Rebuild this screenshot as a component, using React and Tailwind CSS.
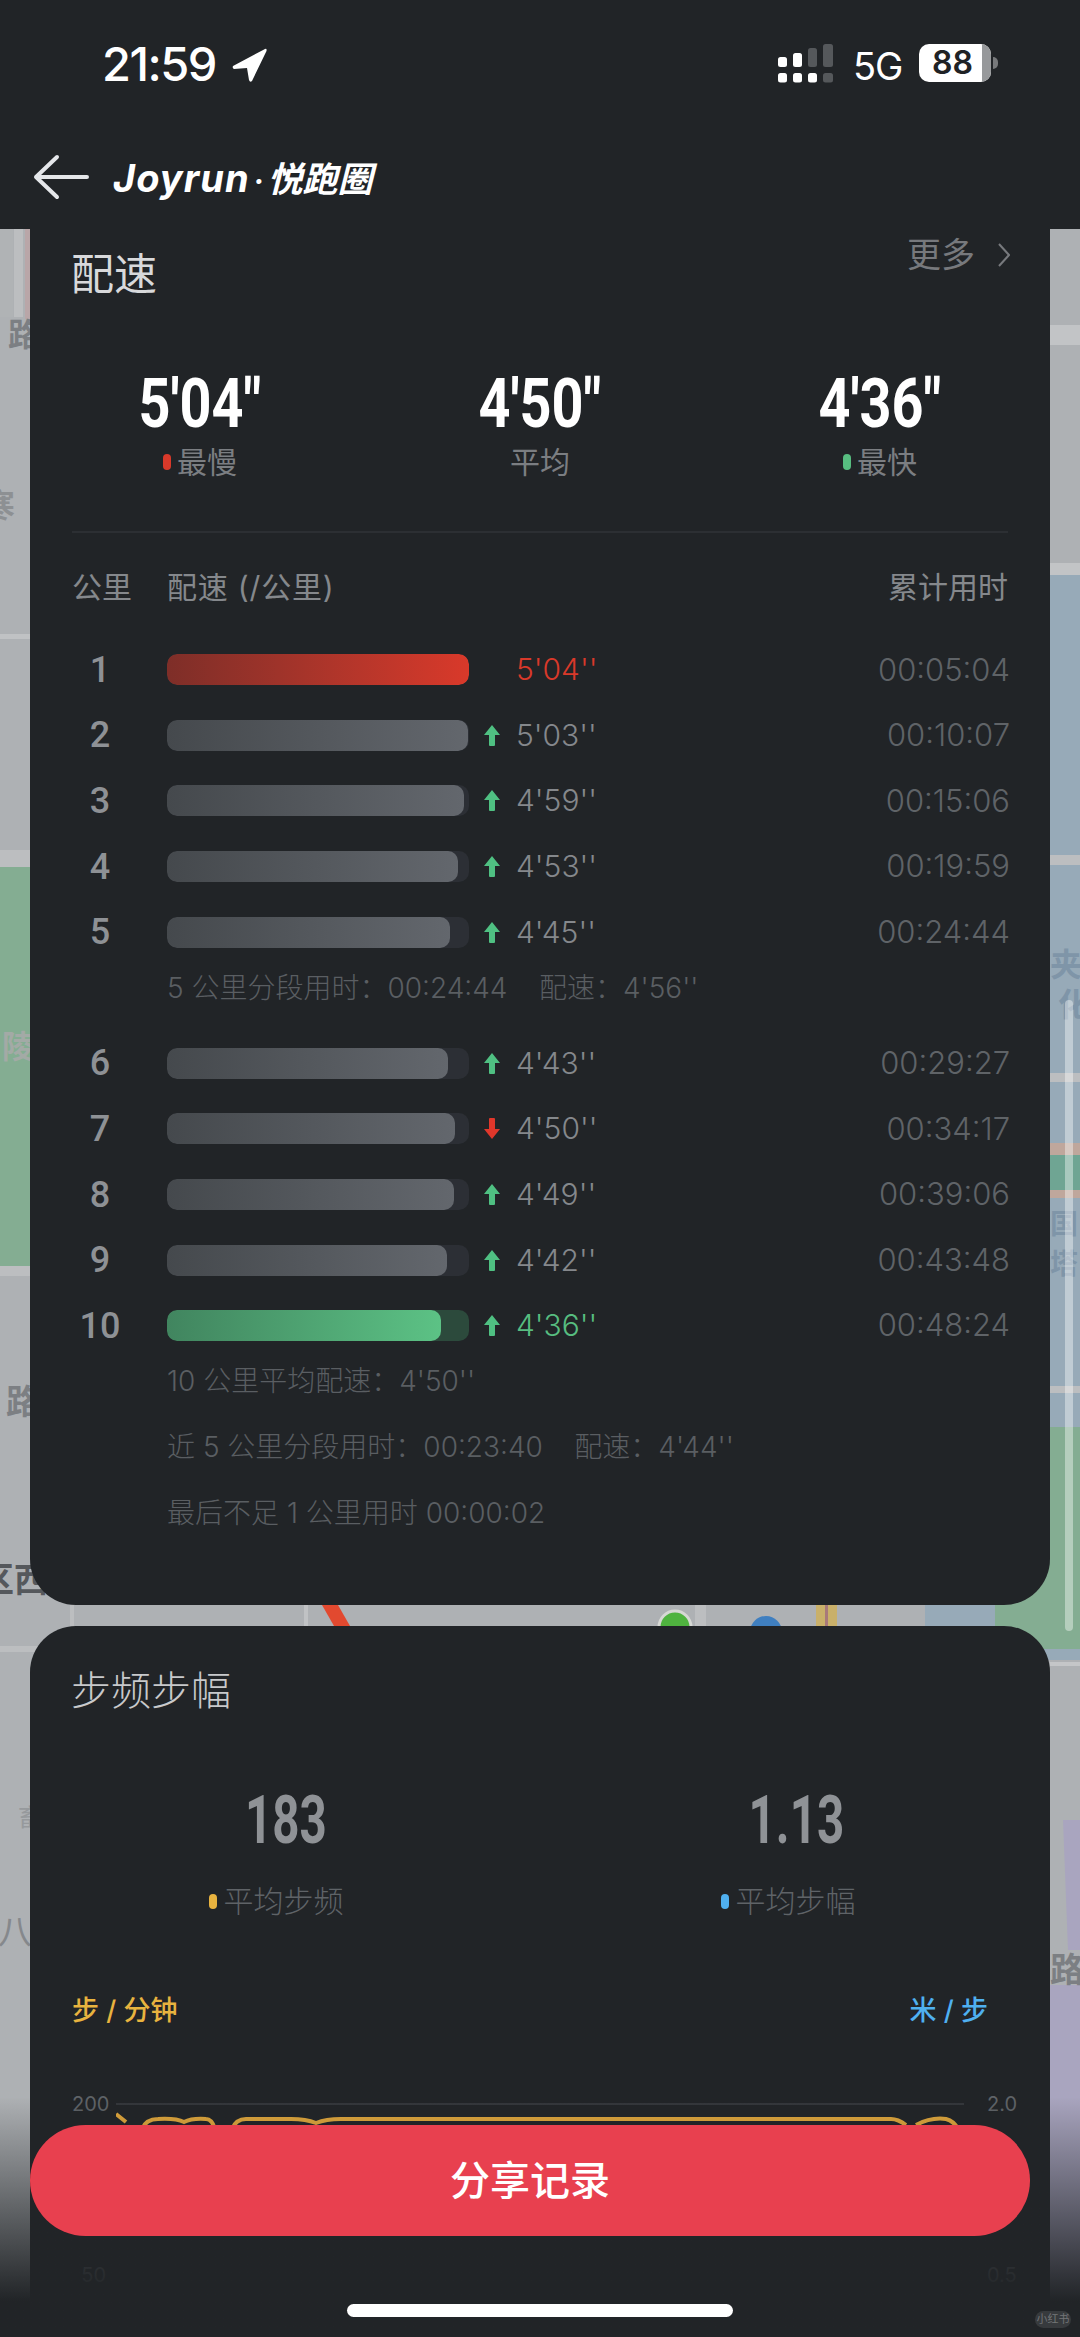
const splits = [
  { km: 1, fill: 302, pace: "5'04''", total: "00:05:04", tone: "red" },
  { km: 2, fill: 301, pace: "5'03''", total: "00:10:07", arrow: "up" },
  { km: 3, fill: 297, pace: "4'59''", total: "00:15:06", arrow: "up" },
  { km: 4, fill: 291, pace: "4'53''", total: "00:19:59", arrow: "up" },
  { km: 5, fill: 283, pace: "4'45''", total: "00:24:44", arrow: "up" },
];

const splitsTwo = [
  { km: 6, fill: 281, pace: "4'43''", total: "00:29:27", arrow: "up" },
  { km: 7, fill: 288, pace: "4'50''", total: "00:34:17", arrow: "down" },
  { km: 8, fill: 287, pace: "4'49''", total: "00:39:06", arrow: "up" },
  { km: 9, fill: 280, pace: "4'42''", total: "00:43:48", arrow: "up" },
  { km: 10, fill: 274, pace: "4'36''", total: "00:48:24", arrow: "up", tone: "green" },
];

function MapBackground() {
  return (
    <svg className="absolute inset-0" width="1080" height="2337" viewBox="0 0 1080 2337">
      <rect width="1080" height="2337" fill="#aeb1b4" />
      <rect x="0" y="229" width="13" height="88" fill="#b0b3b5" />
      <rect x="14" y="229" width="9" height="88" fill="#bcbec0" />
      <rect x="25" y="229" width="5" height="90" fill="#b9a6a8" />
      <rect x="0" y="634" width="30" height="5" fill="#c0c2c4" />
      <rect x="0" y="850" width="30" height="17" fill="#bcbec0" />
      <rect x="0" y="867" width="30" height="399" fill="#84ad92" />
      <rect x="0" y="1266" width="30" height="10" fill="#bcbec0" />
      <rect x="0" y="1646" width="150" height="6" fill="#bcbec0" />
      <rect x="70" y="1605" width="4" height="30" fill="#bcbec0" />
      <rect x="304" y="1605" width="4" height="21" fill="#c0c2c4" />
      <rect x="695" y="1605" width="11" height="21" fill="#bcbec0" />
      <path d="M322 1605 L334 1626 L350 1626 L338 1605 Z" fill="#e2492f" />
      <circle cx="675" cy="1627" r="16" fill="#4fb33f" stroke="#d6d8d4" strokeWidth="3" />
      <circle cx="766" cy="1632" r="16" fill="#3f7fc0" />
      <rect x="816" y="1605" width="21" height="21" fill="#c9b06a" />
      <rect x="825" y="1605" width="3" height="21" fill="#a8797a" />
      <rect x="925" y="1605" width="70" height="21" fill="#97aab8" />
      <rect x="995" y="1427" width="85" height="222" fill="#84ad92" />
      <rect x="1050" y="229" width="30" height="336" fill="#aeb1b4" />
      <rect x="1050" y="325" width="30" height="20" fill="#c2c4c6" />
      <rect x="1050" y="563" width="30" height="12" fill="#c2c4c6" />
      <rect x="1050" y="575" width="30" height="852" fill="#97aab8" />
      <rect x="1050" y="855" width="30" height="10" fill="#bcbec0" />
      <rect x="1050" y="1073" width="30" height="9" fill="#bcbec0" />
      <rect x="1050" y="1143" width="30" height="12" fill="#bfa79c" />
      <rect x="1050" y="1155" width="30" height="35" fill="#6fa593" />
      <rect x="1050" y="1190" width="30" height="8" fill="#bfa79c" />
      <rect x="1050" y="1386" width="30" height="7" fill="#bcbec0" />
      <rect x="1050" y="1427" width="30" height="222" fill="#84ad92" />
      <rect x="1000" y="1649" width="80" height="11" fill="#97aab8" />
      <rect x="1050" y="1662" width="30" height="4" fill="#c4c6c8" />
      <path d="M1063 1820 H1080 V1950 H1068 Z" fill="#a9a5bf" />
      <rect x="1050" y="1985" width="30" height="352" fill="#a9a5bf" />
      <g fontFamily="'Noto Sans CJK SC', sans-serif" fontWeight="700" fill="#7c7f83">
        <text x="8" y="346" fontSize="32">路</text>
        <text x="-17" y="517" fontSize="32" fill="#8d9093">寒</text>
        <text x="2" y="1058" fontSize="32" fill="#a3aaa6">陵</text>
        <text x="6" y="1414" fontSize="34">路</text>
        <text x="-20" y="1592" fontSize="34" fill="#55585c">区西</text>
        <text x="-2" y="1944" fontSize="34" fontWeight="400" fill="#85888c">八</text>
        <text x="18" y="1826" fontSize="24" fontWeight="400" fill="#96999c">畜</text>
        <text x="1050" y="1982" fontSize="34">路</text>
        <text x="1050" y="976" fontSize="32" fill="#7f95a8">夹</text>
        <text x="1058" y="1016" fontSize="32" fill="#7f95a8">化</text>
        <text x="1050" y="1234" fontSize="28" fill="#7f95a8">国</text>
        <text x="1050" y="1274" fontSize="28" fill="#7f95a8">塔</text>
      </g>
    </svg>
  );
}

function StatusBar() {
  return (
    <div className="relative h-[120px]">
      <span className="absolute left-[102px] top-[36px] text-[47px] leading-[56px] font-medium tracking-[-1.5px] text-white">21:59</span>
      <svg className="absolute left-[232px] top-[48px]" width="36" height="35" viewBox="0 0 36 35">
        <path d="M1 18 L33 1 Q35 0 34.5 3 L20 33 Q18 35 17 32 L15 20 L2 21 Q0 20 1 18 Z" fill="#fff" />
      </svg>
      <svg className="absolute left-[778px] top-[44px]" width="56" height="39" viewBox="0 0 56 39">
        <rect x="0" y="13" width="9" height="10" rx="2.5" fill="#fff" />
        <rect x="15" y="9" width="9" height="14" rx="2.5" fill="#fff" />
        <rect x="30" y="4" width="9" height="19" rx="2.5" fill="#55585b" />
        <rect x="45" y="0" width="10" height="23" rx="2.5" fill="#55585b" />
        <rect x="0" y="29" width="9" height="9.5" rx="2.5" fill="#fff" />
        <rect x="15" y="29" width="9" height="9.5" rx="2.5" fill="#fff" />
        <rect x="30" y="29" width="9" height="9.5" rx="2.5" fill="#fff" />
        <rect x="45" y="29" width="10" height="9.5" rx="2.5" fill="#55585b" />
      </svg>
      <span className="absolute left-[853px] top-[43px] text-[38px] leading-[46px] tracking-[-1px] text-white">5G</span>
      <div className="absolute left-[919px] top-[44px] flex h-[38px] w-[72px] items-center overflow-hidden rounded-[10px] bg-white">
        <span className="ml-[13px] text-[32px] leading-[38px] font-semibold text-[#1f2225]">88</span>
        <div className="absolute right-0 top-0 h-full w-[9px] bg-[#97999b]" />
      </div>
      <div className="absolute left-[993px] top-[57px] h-[12px] w-[5px] rounded-r-full bg-[#77797b]" />
    </div>
  );
}

function TitleBar() {
  return (
    <div className="flex h-[109px] items-start">
      <svg className="ml-[33px] mt-[34px]" width="56" height="46" viewBox="0 0 56 46">
        <path d="M24 3 L3 23 L24 43 M3 23 H54" fill="none" stroke="#e5e7ea" strokeWidth="4" strokeLinecap="round" strokeLinejoin="round" />
      </svg>
      <div className="ml-[24px] mt-[33px] flex items-baseline italic font-bold text-white">
        <span className="text-[38px] leading-[48px] tracking-[1px]">Joyrun</span>
        <span className="mx-[4px] text-[30px] leading-[48px]">·</span>
        <span className="text-[35px] leading-[48px] font-['Noto_Sans_CJK_SC',sans-serif]">悦跑圈</span>
      </div>
    </div>
  );
}

function Stat({ value, label, dot }) {
  return (
    <div className="flex flex-col items-center">
      <span className="scale-x-[.82] font-['Roboto',sans-serif] text-[68px] leading-[64px] font-bold text-white">{value}</span>
      <div className="mt-[10px] flex h-[32px] items-center gap-[6px] text-[30px] leading-[32px] text-[#7b7e82]">
        {dot && <span className={`h-[16px] w-[8px] rounded-full ${dot}`} />}
        <span>{label}</span>
      </div>
    </div>
  );
}

function Arrow({ dir }) {
  if (!dir) return <div className="ml-[15px] w-[16px]" />;
  return (
    <svg className={`ml-[15px] ${dir === "down" ? "rotate-180" : ""}`} width="16" height="21" viewBox="0 0 16 21">
      <path d="M8 0 L16 10 H11 V20 Q11 21 10 21 H6 Q5 21 5 20 V10 H0 Z" fill={dir === "down" ? "#e0372b" : "#4fc082"} />
    </svg>
  );
}

function SplitRow({ item }) {
  const track = item.tone === "green" ? "bg-[#2c4a3c]" : "bg-[#2c2f35]";
  const fill =
    item.tone === "red"
      ? "from-[#7e2e28] to-[#d9392a]"
      : item.tone === "green"
        ? "from-[#41855f] to-[#5cc285]"
        : "from-[#45494d] to-[#63676d]";
  const paceColor = item.tone === "red" ? "text-[#d9392a]" : item.tone === "green" ? "text-[#57bd80]" : "text-[#85888c]";
  return (
    <div className="flex h-[65.6px] items-center pl-[42px] pr-[40px]">
      <span className="w-[56px] text-center font-['Roboto',sans-serif] text-[36px] font-medium text-[#8e9195]">{item.km}</span>
      <div className={`ml-[39px] h-[31px] w-[302px] overflow-hidden rounded-[10px] ${track}`}>
        <div className={`h-full rounded-[10px] bg-gradient-to-r ${fill}`} style={{ width: item.fill }} />
      </div>
      <Arrow dir={item.arrow} />
      <span className={`ml-[16px] text-[30px] font-light ${paceColor}`}>{item.pace}</span>
      <span className="flex-1 text-right text-[31px] font-light text-[#5f6367]">{item.total}</span>
    </div>
  );
}

function Note({ children }) {
  return <div className="flex h-[65.6px] items-center pb-[20px] pl-[137px] text-[28px] font-light whitespace-pre text-[#5a5e62]">{children}</div>;
}

function PaceCard() {
  return (
    <div className="mx-[30px] h-[1376px] rounded-b-[46px] bg-[#212427]">
      <div className="flex h-[76px] items-start justify-between pl-[41px] pr-[40px]">
        <h2 className="mt-[17px] text-[43px] leading-[56px] text-[#d8d9db]">配速</h2>
        <div className="mt-[3px] flex items-center gap-[23px] text-[34px] leading-[46px] text-[#77797d]">
          <span>更多</span>
          <svg width="12" height="24" viewBox="0 0 12 24">
            <path d="M1 1 L11 12 L1 23" fill="none" stroke="#77797d" strokeWidth="2" />
          </svg>
        </div>
      </div>
      <div className="mt-[67px] grid grid-cols-3">
        <Stat value={`5'04"`} label="最慢" dot="bg-[#d9392a]" />
        <Stat value={`4'50"`} label="平均" />
        <Stat value={`4'36"`} label="最快" dot="bg-[#57bd80]" />
      </div>
      <div className="mx-[42px] mt-[53px] h-[2px] bg-[#2c2f33]" />
      <div className="mt-[37px] flex h-[34px] items-center pl-[42px] pr-[42px] text-[30px] text-[#85888c]">
        <span className="w-[95px]">公里</span>
        <span className="tracking-[0.8px]">配速 (/公里)</span>
        <span className="ml-auto">累计用时</span>
      </div>
      <div className="mt-[33px]">
        {splits.map((item) => (
          <SplitRow key={item.km} item={item} />
        ))}
        <Note>5 公里分段用时：00:24:44    配速：4'56''</Note>
        {splitsTwo.map((item) => (
          <SplitRow key={item.km} item={item} />
        ))}
        <Note>10 公里平均配速：4'50''</Note>
        <Note>近 5 公里分段用时：00:23:40    配速：4'44''</Note>
        <Note>最后不足 1 公里用时 00:00:02</Note>
      </div>
    </div>
  );
}

function CadenceStat({ value, label, dot, shift }) {
  return (
    <div className="flex flex-col items-center">
      <span className="scale-x-[.72] font-['Roboto',sans-serif] text-[66px] leading-[62px] font-bold text-[#8f9296]">{value}</span>
      <div className={`mt-[33px] flex h-[32px] items-center gap-[7px] text-[30px] leading-[32px] font-light text-[#5f6367] ${shift}`}>
        <span className={`h-[15px] w-[8px] rounded-full ${dot}`} />
        <span>{label}</span>
      </div>
    </div>
  );
}

function CadenceCard() {
  return (
    <div className="mx-[30px] mt-[21px] h-[800px] rounded-[46px] bg-[#212427]">
      <h2 className="pl-[41px] pt-[37px] text-[40px] leading-[56px] font-light text-[#c8c9cb]">步频步幅</h2>
      <div className="mt-[71px] grid grid-cols-[510px_510px]">
        <div className="pl-[2px]">
          <CadenceStat value="183" label="平均步频" dot="bg-[#e8b33f]" shift="-translate-x-[10px]" />
        </div>
        <div className="pl-[2px]">
          <CadenceStat value="1.13" label="平均步幅" dot="bg-[#4fb0f0]" shift="-translate-x-[8px]" />
        </div>
      </div>
      <div className="mt-[75px] flex h-[38px] items-center justify-between pl-[42px] pr-[62px] text-[27px] font-medium">
        <span className="text-[#e8b33f]">步 / 分钟</span>
        <span className="text-[#4fb0f0]">米 / 步</span>
      </div>
      <div className="mt-[62px] flex h-[195px] items-stretch">
        <div className="ml-[42px] flex h-[195px] w-[34px] flex-col justify-between text-right text-[20px] leading-[24px] text-[#5f6367]">
          <span>200</span>
          <span>50</span>
        </div>
        <div className="ml-[10px] w-[848px]">
          <div className="mt-[11px] h-[2px] bg-[#34373b]" />
          <svg width="848" height="30" viewBox="0 0 848 30">
            <path
              d="M0 9 L10 17 M26 24 Q30 14 42 14 Q60 13 68 17 Q76 13 90 14 Q96 14 99 24 M116 24 Q120 14 130 14 L175 14 Q190 14 200 18 Q210 14 225 14 L775 14 Q782 14 790 20 M800 20 Q815 12 830 14 Q838 16 842 24"
              fill="none"
              stroke="#e3a93c"
              strokeWidth="4"
            />
          </svg>
        </div>
        <div className="ml-[23px] flex h-[195px] w-[34px] flex-col justify-between text-[20px] leading-[24px] text-[#5f6367]">
          <span>2.0</span>
          <span>0.5</span>
        </div>
      </div>
    </div>
  );
}

export default function App() {
  return (
    <div className="relative h-[2337px] w-[1080px] overflow-hidden font-['Inter','Noto_Sans_CJK_SC',sans-serif]">
      <MapBackground />
      <div className="relative">
        <div className="bg-[#212427]">
          <StatusBar />
          <TitleBar />
        </div>
        <PaceCard />
        <CadenceCard />
      </div>

      <div className="absolute right-[7px] top-[1000px] h-[631px] w-[8px] rounded-full bg-white/40" />
      <div className="absolute inset-x-0 bottom-0 h-[240px] bg-gradient-to-b from-[#212427]/0 to-[#212427] to-[85%]" />
      <button className="absolute left-[30px] top-[2125px] flex h-[111px] w-[1000px] items-center justify-center rounded-full bg-[#e8404f] text-[40px] font-medium text-white">
        分享记录
      </button>
      <div className="absolute left-[347px] top-[2304px] h-[13px] w-[386px] rounded-full bg-white" />
      <div className="absolute left-[1035px] top-[2311px] flex h-[17px] w-[36px] items-center justify-center rounded-full bg-white/10 text-[11px] leading-none text-white/30">小红书</div>
    </div>
  );
}
